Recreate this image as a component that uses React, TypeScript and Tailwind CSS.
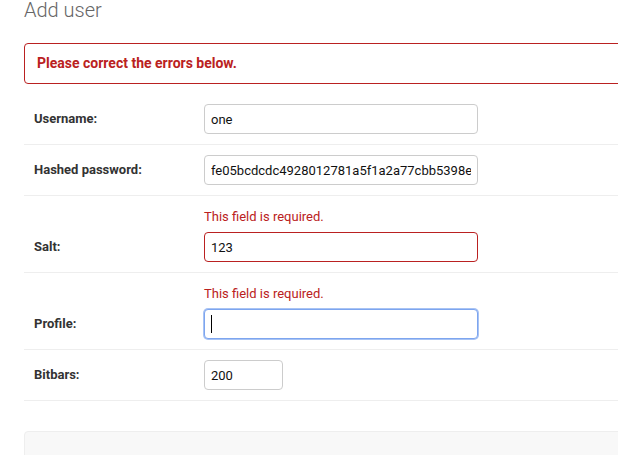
import React from 'react';

type Field = {
    label: string;
    value: string;
    error?: string;
    width?: string;
    state?: 'error' | 'focus';
};

const fields: Field[] = [
    { label: 'Username:', value: 'one' },
    { label: 'Hashed password:', value: 'fe05bcdcdc4928012781a5f1a2a77cbb5398e4a1b2c3' },
    { label: 'Salt:', value: '123', error: 'This field is required.', state: 'error' },
    { label: 'Profile:', value: '', error: 'This field is required.', state: 'focus' },
    { label: 'Bitbars:', value: '200', width: 'w-[79px]' },
];

function FormRow({ field }: { field: Field }) {
    const border =
        field.state === 'error'
            ? 'border-[#ba2121]'
            : field.state === 'focus'
            ? 'border-[#7da5ef] shadow-[0_0_0_1px_#a8c3f4]'
            : 'border-[#cccccc]';

    return (
        <div className="px-[10px] py-[10px] border-b border-[#eeeeee]">
            {field.error && (
                <ul className="ml-[170px] h-[22px] mb-[4px] text-[13px] leading-[22px] text-[#ba2121]">
                    <li>{field.error}</li>
                </ul>
            )}
            <div className="flex items-center">
                <label className="w-[170px] shrink-0 text-[13px] font-bold text-[#333333]">{field.label}</label>
                <div className={`relative h-[30px] ${field.width ?? 'w-[274px]'}`}>
                    <input
                        type="text"
                        readOnly
                        value={field.value}
                        className={`w-full h-full px-[6px] border rounded-[4px] bg-white text-[13px] text-[#111111] outline-none ${border}`}
                    />
                    {field.state === 'focus' && (
                        <span className="absolute left-[7px] top-[6px] w-px h-[18px] bg-black" />
                    )}
                </div>
            </div>
        </div>
    );
}

export default function App() {
    return (
        <div className="w-[618px] h-[455px] overflow-hidden bg-white font-['Roboto',_'Liberation_Sans',_sans-serif]">
            <div className="w-[720px] pl-[24px]">
                <h1 className="h-[43px] text-[20px] font-light leading-[20px] text-[#666666]">Add user</h1>

                {/* Error note */}
                <p className="h-[41px] px-[12px] flex items-center border border-[#ba2121] rounded-[4px] text-[14px] font-bold text-[#ba2121] mb-[10px]">
                    Please correct the errors below.
                </p>

                <fieldset>
                    {fields.map((f) => (
                        <FormRow key={f.label} field={f} />
                    ))}
                </fieldset>

                {/* Submit row */}
                <div className="mt-[30px] h-[80px] bg-[#f8f8f8] border border-[#eeeeee] rounded-[4px]" />
            </div>
        </div>
    );
}
